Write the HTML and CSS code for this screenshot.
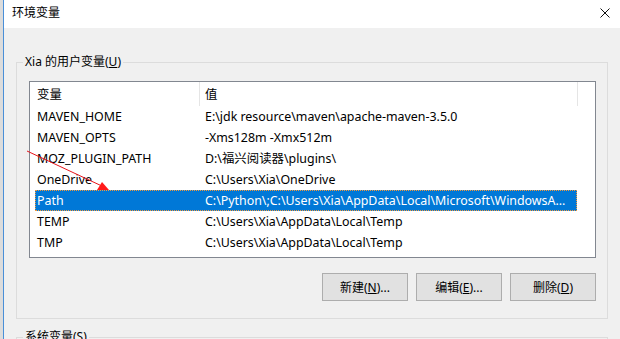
FILE: index.html
```html
<!DOCTYPE html>
<html>
<head>
    <meta charset="UTF-8">
    <title>环境变量</title>
    <link rel="stylesheet" href="styles.css">
</head>
<body>
<div class="desk">
    <div class="behind"></div>
    <div class="dialog">
        <div class="titlebar">
            <span class="title">环境变量</span>
            <svg class="close" width="10" height="10" viewBox="0 0 10 10">
                <path d="M0.5 0.5 L9.5 9.5 M9.5 0.5 L0.5 9.5" stroke="#111" stroke-width="1" fill="none"/>
            </svg>
        </div>

        <div class="content">
            <!-- 用户变量 -->
            <fieldset class="group">
                <legend>Xia 的用户变量(<u>U</u>)</legend>
                <div class="listview">
                    <div class="lv-head">
                        <div class="hcol1">变量</div>
                        <div class="hcol2">值</div>
                    </div>
                    <div class="row"><div class="col1">MAVEN_HOME</div><div class="col2">E:\jdk resource\maven\apache-maven-3.5.0</div></div>
                    <div class="row"><div class="col1">MAVEN_OPTS</div><div class="col2">-Xms128m -Xmx512m</div></div>
                    <div class="row"><div class="col1">MOZ_PLUGIN_PATH</div><div class="col2">D:\福兴阅读器\plugins\</div></div>
                    <div class="row"><div class="col1">OneDrive</div><div class="col2">C:\Users\Xia\OneDrive</div></div>
                    <div class="row selected"><div class="col1">Path</div><div class="col2">C:\Python\;C:\Users\Xia\AppData\Local\Microsoft\WindowsA...</div></div>
                    <div class="row"><div class="col1">TEMP</div><div class="col2">C:\Users\Xia\AppData\Local\Temp</div></div>
                    <div class="row"><div class="col1">TMP</div><div class="col2">C:\Users\Xia\AppData\Local\Temp</div></div>
                </div>
                <div class="buttons">
                    <button>新建(<u>N</u>)...</button>
                    <button>编辑(<u>E</u>)...</button>
                    <button>删除(<u>D</u>)</button>
                </div>
            </fieldset>

            <!-- 系统变量 -->
            <fieldset class="group sys">
                <legend>系统变量(<u>S</u>)</legend>
            </fieldset>
        </div>
    </div>

    <!-- 红色箭头标注 -->
    <svg class="arrow" width="620" height="339" viewBox="0 0 620 339">
        <line x1="27" y1="151" x2="104" y2="187" stroke="#e8141b" stroke-width="1"/>
        <polygon points="97,190 102,182 109,190" fill="#ff1a1a"/>
    </svg>
</div>
</body>
</html>
```

FILE: styles.css
```css
/* 页面基础 */
* {
    box-sizing: border-box;
}
body {
    margin: 0;
    font-family: "Noto Sans", "Noto Sans CJK SC", sans-serif;
    font-size: 12px;
    color: #000;
    background-color: #f0f0f0;
}
.desk {
    position: relative;
    display: flex;
    width: 620px;
    height: 339px;
    overflow: hidden;
}

/* 后面的窗口露出的一条 */
.behind {
    width: 3px;
    background-color: #dcdcdc;
}
.dialog {
    flex: 1;
    border-left: 1px solid #4a8fd8;
    background-color: #f0f0f0;
}

/* 标题栏 */
.titlebar {
    height: 28px;
    background-color: #fff;
    display: flex;
    align-items: center;
    justify-content: space-between;
    padding: 0 10px 0 8px;
}
.title {
    line-height: 16px;
    margin-top: -2px;
}
.close {
    margin-top: -3px;
}

/* 分组框 */
.group {
    margin: 26px 12px 0 12px;
    padding: 11px 11px 17px 12px;
    border: 1px solid #dcdcdc;
    min-width: 0;
}
.group legend {
    margin-left: -6px;
    padding: 0 2px;
    line-height: 16px;
}
.group.sys {
    margin-top: 10px;
    height: 40px;
}

/* 列表 */
.listview {
    height: 177px;
    background-color: #fff;
    border: 1px solid #828790;
    font-size: 12.4px;
}
.lv-head {
    display: flex;
    height: 24px;
    line-height: 26px;
}
.hcol1 {
    width: 170px;
    padding-left: 7px;
    border-right: 1px solid #e5e5e5;
}
.hcol2 {
    width: 378px;
    padding-left: 5px;
    border-right: 1px solid #e5e5e5;
}
.row {
    display: flex;
    height: 21px;
    line-height: 22px;
    margin-left: 5px;
    width: 542px;
    white-space: nowrap;
}
.col1 {
    width: 164px;
    padding-left: 2px;
    overflow: hidden;
}
.col2 {
    flex: 1;
    padding-left: 6px;
    overflow: hidden;
}
.row.selected {
    background-color: #0078d7;
    color: #fff;
    outline: 1px dotted #f39a3c;
    outline-offset: -1px;
}

/* 按钮 */
.buttons {
    display: flex;
    justify-content: flex-end;
    gap: 8px;
    margin-top: 15px;
}
button {
    width: 86px;
    height: 28px;
    padding: 0;
    background-color: #e1e1e1;
    border: 1px solid #adadad;
    font-family: inherit;
    font-size: 12px;
    color: #000;
}

/* 标注 */
.arrow {
    position: absolute;
    left: 0;
    top: 0;
    pointer-events: none;
}
```
